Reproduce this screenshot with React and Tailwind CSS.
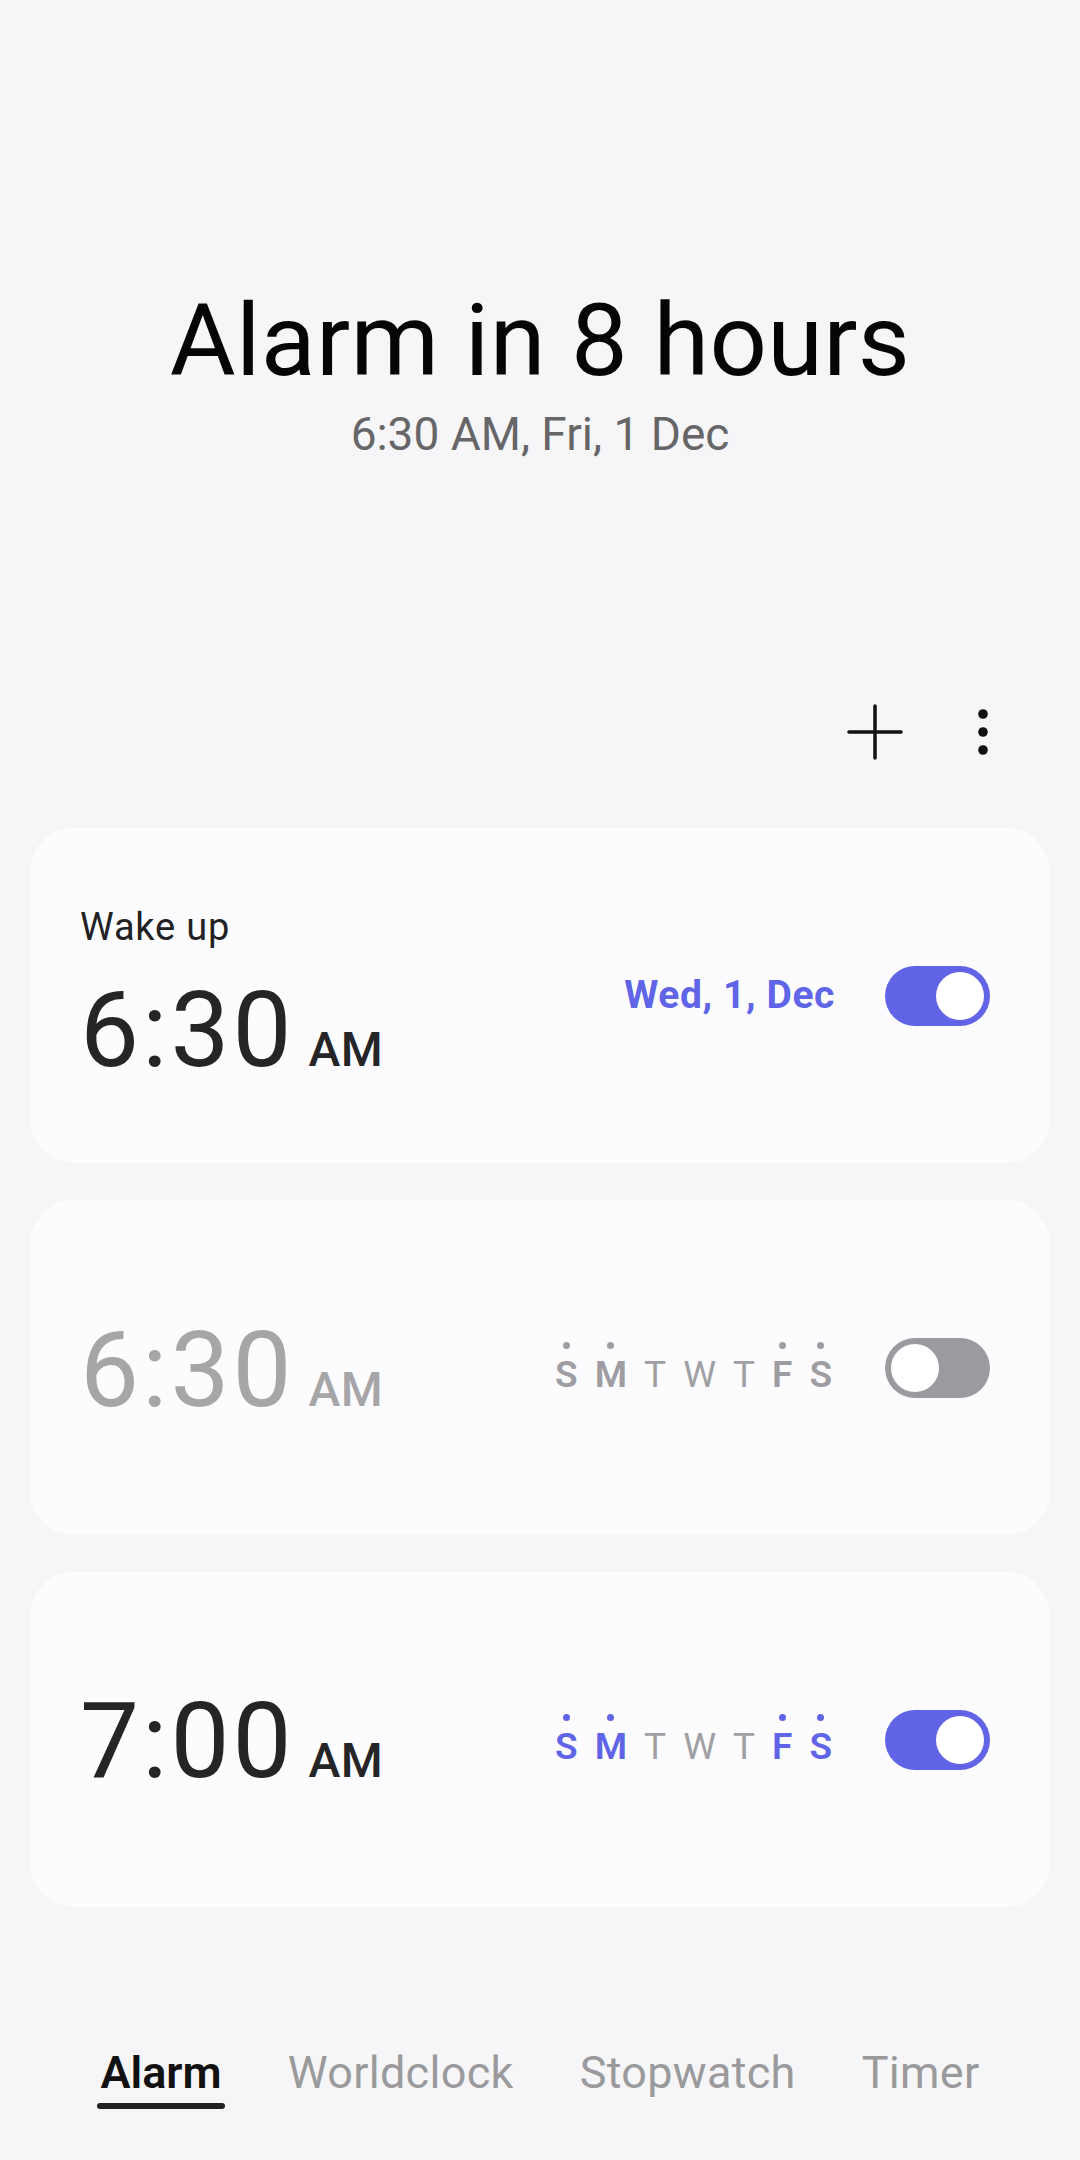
import React from 'react';

const days = [
  { d: 'S', on: true },
  { d: 'M', on: true },
  { d: 'T', on: false },
  { d: 'W', on: false },
  { d: 'T', on: false },
  { d: 'F', on: true },
  { d: 'S', on: true },
];

function Toggle({ on }) {
  return (
    <div
      className={
        'flex h-[60px] w-[105px] items-center rounded-full p-[6px] ' +
        (on ? 'justify-end bg-[#6064e6]' : 'justify-start bg-[#9b9b9f]')
      }
    >
      <div className="h-[48px] w-[48px] rounded-full bg-white" />
    </div>
  );
}

function Days({ enabled }) {
  return (
    <div className="flex items-end gap-[17px]">
      {days.map((item, i) => (
        <div key={i} className="flex flex-col items-center">
          <div
            className={
              'mb-[7px] h-[7px] w-[7px] rounded-full ' +
              (item.on ? (enabled ? 'bg-[#6064e6]' : 'bg-[#9e9ea2]') : 'bg-transparent')
            }
          />
          <span
            className={
              'text-[37px] leading-none ' +
              (item.on
                ? enabled
                  ? 'font-semibold text-[#6064e6]'
                  : 'font-semibold text-[#9e9ea2]'
                : 'font-normal text-[#a0a0a4]')
            }
          >
            {item.d}
          </span>
        </div>
      ))}
    </div>
  );
}

function Time({ value, dim }) {
  return (
    <div className={'flex items-baseline ' + (dim ? 'text-[#a6a6a9]' : 'text-[#252528]')}>
      <span className="text-[105px] leading-none tracking-[3px]">{value}</span>
      <span className="ml-[14px] text-[48px] font-medium leading-none tracking-[0.5px]">AM</span>
    </div>
  );
}

function AlarmCard({ children, right }) {
  return (
    <div className="flex h-[335px] items-center justify-between rounded-[44px] bg-[#fcfcfe] pl-[50px] pr-[60px]">
      <div className="flex flex-col">{children}</div>
      {right}
    </div>
  );
}

export default function App() {
  return (
    <div className="flex min-h-screen w-full flex-col bg-[#f6f6f8] font-['Roboto','Liberation_Sans',sans-serif]">
      <header className="flex flex-col items-center pt-[290px]">
        <h1 className="text-[101px] font-normal leading-none tracking-[0.3px] text-[#050505]">Alarm in 8 hours</h1>
        <p className="mt-[20px] text-[46px] leading-none text-[#666668]">6:30 AM, Fri, 1 Dec</p>
      </header>

      <div className="mt-[235px] flex h-[80px] items-center justify-end gap-[48px] pr-[67px]">
        <button className="flex h-[60px] w-[60px] items-center justify-center" aria-label="Add alarm">
          <svg width="56" height="56" viewBox="0 0 56 56" fill="none" stroke="#111" strokeWidth="3.5" strokeLinecap="round">
            <path d="M28 2v52M2 28h52" />
          </svg>
        </button>
        <button className="flex h-[60px] w-[60px] items-center justify-center" aria-label="More options">
          <svg width="12" height="48" viewBox="0 0 12 48" fill="#111">
            <circle cx="6" cy="6" r="4.8" />
            <circle cx="6" cy="24" r="4.8" />
            <circle cx="6" cy="42" r="4.8" />
          </svg>
        </button>
      </div>

      <div className="mt-[56px] flex flex-col gap-[37px] px-[30px]">
        <AlarmCard
          right={
            <div className="flex items-center gap-[50px]">
              <span className="text-[39px] font-bold leading-none tracking-[0.6px] text-[#6064e6]">Wed, 1, Dec</span>
              <Toggle on />
            </div>
          }
        >
          <span className="text-[38px] leading-none tracking-[0.8px] text-[#222224]">Wake up</span>
          <div className="mt-[32px]">
            <Time value="6:30" />
          </div>
        </AlarmCard>

        <AlarmCard
          right={
            <div className="flex items-center gap-[53px]">
              <Days enabled={false} />
              <Toggle on={false} />
            </div>
          }
        >
          <div className="pt-[6px]">
            <Time value="6:30" dim />
          </div>
        </AlarmCard>

        <AlarmCard
          right={
            <div className="flex items-center gap-[53px]">
              <Days enabled />
              <Toggle on />
            </div>
          }
        >
          <div className="pt-[4px]">
            <Time value="7:00" />
          </div>
        </AlarmCard>
      </div>

      <nav className="mt-[143px] flex items-start justify-center gap-[66px] pb-[40px]">
        <div className="flex flex-col items-center">
          <span className="text-[45px] font-semibold leading-none text-[#111]">Alarm</span>
          <div className="mt-[8px] h-[6px] w-[calc(100%+6px)] rounded-full bg-[#222]" />
        </div>
        <span className="text-[45px] leading-none tracking-[0.3px] text-[#9a9a9c]">Worldclock</span>
        <span className="text-[45px] leading-none tracking-[0.3px] text-[#9a9a9c]">Stopwatch</span>
        <span className="text-[45px] leading-none tracking-[0.3px] text-[#9a9a9c]">Timer</span>
      </nav>
    </div>
  );
}
